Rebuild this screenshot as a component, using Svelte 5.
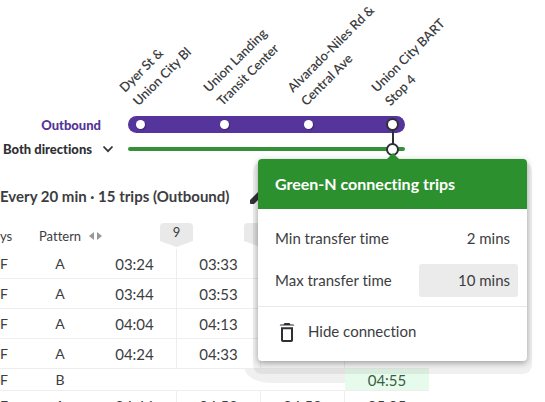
<script lang="ts">
	type Trip = { days: string; pattern: string; times: string[]; short?: boolean };

	const stops = [
		['Dyer St &', 'Union City Bl'],
		['Union Landing', 'Transit Center'],
		['Alvarado-Niles Rd &', 'Central Ave'],
		['Union City BART', 'Stop 4']
	];

	const trips: Trip[] = [
		{ days: 'F', pattern: 'A', times: ['03:24', '03:33', '', ''] },
		{ days: 'F', pattern: 'A', times: ['03:44', '03:53', '', ''] },
		{ days: 'F', pattern: 'A', times: ['04:04', '04:13', '', ''] },
		{ days: 'F', pattern: 'A', times: ['04:24', '04:33', '', ''] },
		{ days: 'F', pattern: 'B', times: ['', '', '', '04:55'], short: true },
		{ days: 'F', pattern: 'A', times: ['04:44', '04:53', '04:58', '05:05'] }
	];

	let minTransfer = $state('2 mins');
	let maxTransfer = $state('10 mins');
	let direction = $state('both');
</script>

<main>
	<section class="map">
		<ol class="labels">
			{#each stops as [first, second]}
				<li><span>{first}<br />{second}</span></li>
			{/each}
		</ol>

		<div class="direction outbound">Outbound</div>
		<div class="line purple">
			{#each stops as _, i}
				<span class="stop" class:linked={i === stops.length - 1}></span>
			{/each}
		</div>

		<div class="direction picker">
			<select bind:value={direction} aria-label="Direction">
				<option value="both">Both directions</option>
			</select>
			<svg width="12" height="8" viewBox="0 0 12 8" aria-hidden="true">
				<path d="M1.500 1.500 6 6.200l4.500-4.700" fill="none" stroke="#333438" stroke-width="1.800" />
			</svg>
		</div>
		<div class="line green">
			<div class="connection">
				<div class="popover">
					<h2>Green-N connecting trips</h2>
					<div class="fields">
						<div class="field">
							<label for="min">Min transfer time</label>
							<input id="min" type="text" bind:value={minTransfer} />
						</div>
						<div class="field">
							<label for="max">Max transfer time</label>
							<input id="max" class="active" type="text" bind:value={maxTransfer} />
						</div>
					</div>
					<button class="hide" type="button">
						<svg width="16" height="20" viewBox="0 0 16 20" aria-hidden="true">
							<path
								d="M3 6.200h10v12q0 .8-.8.8H3.800q-.8 0-.8-.8z"
								fill="none"
								stroke="#2f3034"
								stroke-width="2"
							/>
							<path
								d="M.8 3.400q0-.8.800-.8H4.500L5.500 1h5l1 1.600h2.900q.8 0 .8.800z"
								fill="#2f3034"
							/>
						</svg>
						Hide connection
					</button>
				</div>
			</div>
		</div>
	</section>

	<header class="summary">
		<h1>Every 20 min · 15 trips (Outbound)</h1>
		<button type="button" aria-label="Edit">
			<svg width="18" height="18" viewBox="0 0 18 18" aria-hidden="true">
				<path d="M1 13 11 3l4 4L5 17H2q-1 0-1-1zM12 2l1.500-1.500 4 4L16 6z" fill="#333438" />
			</svg>
		</button>
	</header>

	<table>
		<thead>
			<tr>
				<th class="days">ys</th>
				<th class="pattern">
					<span>
						Pattern
						<svg width="13" height="8" viewBox="0 0 13 8" aria-hidden="true">
							<path d="M5 0v8L0 4zM8 0v8l5-4z" fill="#97989b" />
						</svg>
					</span>
				</th>
				<th class="time"><span class="pin">9</span></th>
				<th class="time"><span class="pin"></span></th>
				<th class="time"></th>
				<th class="time"></th>
			</tr>
		</thead>
		<tbody>
			{#each trips as trip}
				<tr class:short={trip.short}>
					<td class="days">{trip.days}</td>
					<td class="pattern">{trip.pattern}</td>
					{#each trip.times as time}
						<td class="time" class:match={trip.short && time}>{time}</td>
					{/each}
				</tr>
			{/each}
		</tbody>
	</table>
</main>

<style>
	:global(body) {
		overflow: hidden;
		background: #fff;
	}

	main {
		height: 100vh;
		overflow: hidden;
		font-family: Lato, 'Liberation Sans', sans-serif;
		font-size: 15px;
		font-variant-ligatures: none;
		color: #3c3d41;
	}

	h1,
	h2,
	ol {
		margin: 0;
		padding: 0;
	}

	input,
	select,
	button {
		font: inherit;
		font-variant-ligatures: none;
		color: inherit;
		border: 0;
		background: none;
		padding: 0;
	}

	svg {
		flex: none;
	}

	.map {
		display: grid;
		grid-template-columns: 128px 277px;
		grid-template-rows: 116px 17px 32px;
		align-items: center;
	}

	.labels {
		grid-column: 2;
		align-self: end;
		display: grid;
		grid-template-columns: repeat(4, 84px);
		padding: 0 0 6px 14px;
		list-style: none;
		font-size: 13px;
		font-weight: 600;
		line-height: 19px;
		white-space: nowrap;
	}

	.labels span {
		display: inline-block;
		vertical-align: bottom;
		transform: rotate(-45deg);
		transform-origin: 0 100%;
	}

	.direction {
		display: flex;
		justify-content: flex-end;
		align-items: center;
		font-size: 13px;
		font-weight: 900;
		line-height: 16px;
	}

	.outbound {
		padding-right: 27px;
		color: #55349b;
	}

	.picker {
		gap: 9px;
		padding-right: 14px;
	}

	.picker select {
		appearance: none;
		color: #2f3034;
	}

	.line {
		display: flex;
		align-items: center;
		justify-content: space-between;
		box-sizing: border-box;
	}

	.purple {
		height: 17px;
		padding: 0 8px;
		border-radius: 9px;
		background: #55349b;
	}

	.stop {
		width: 9px;
		height: 9px;
		border-radius: 50%;
		background: #fff;
		box-shadow: 1px 1px 1px #3c2a70;
	}

	.stop.linked {
		box-shadow: 0 0 0 2px #2f3034;
	}

	.green {
		height: 4px;
		border-radius: 2px;
		background: #359038;
		justify-content: flex-end;
		padding-right: 6px;
	}

	.connection {
		position: relative;
		width: 9px;
		height: 9px;
		border: 2px solid #2f3034;
		border-radius: 50%;
		background: #fff;
	}

	/* joins the two circles */
	.connection::before {
		content: '';
		position: absolute;
		left: 4px;
		bottom: 9px;
		width: 2px;
		height: 14px;
		background: #2f3034;
	}

	.popover {
		position: absolute;
		top: 14px;
		left: -130px;
		z-index: 1;
		width: 269px;
		border-radius: 4px;
		background: #fff;
		box-shadow:
			0 2px 6px rgba(0, 0, 0, 0.35),
			0 8px 0 5px rgba(0, 0, 0, 0.06);
	}

	.popover::before {
		content: '';
		position: absolute;
		top: -6px;
		left: 128px;
		border: 7px solid transparent;
		border-top: 0;
		border-bottom-color: #2d902f;
	}

	.popover h2 {
		padding: 0 17px;
		border-radius: 4px 4px 0 0;
		background: #2d902f;
		color: #fff;
		font-size: 16px;
		font-weight: 700;
		line-height: 50px;
	}

	.fields {
		display: grid;
		gap: 9px;
		padding: 13px 9px 9px 17px;
		border-bottom: 1px solid #e9e9e9;
	}

	.field {
		display: flex;
		align-items: center;
		justify-content: space-between;
	}

	.field input {
		box-sizing: border-box;
		width: 99px;
		height: 33px;
		padding: 0 8px;
		border-radius: 3px;
		text-align: right;
	}

	.field input.active {
		background: #ebebeb;
	}

	.hide {
		display: flex;
		align-items: center;
		gap: 13px;
		width: 100%;
		padding: 15px 21px 19px;
		line-height: 19px;
	}

	.summary {
		display: flex;
		align-items: center;
		gap: 20px;
		height: 24px;
		margin-top: 19px;
	}

	h1 {
		font-size: 15px;
		font-weight: 700;
		line-height: 24px;
		white-space: nowrap;
	}

	.summary button {
		display: flex;
	}

	table {
		width: 429px;
		margin-top: 15px;
		border-collapse: separate;
		border-spacing: 0;
		table-layout: fixed;
	}

	th,
	td {
		padding: 0;
		font-weight: 400;
		text-align: center;
	}

	th {
		height: 26px;
		font-size: 13px;
	}

	td {
		box-sizing: border-box;
		height: 30px;
		border-bottom: 1px solid #eee;
	}

	.days {
		width: 27px;
		text-align: left;
	}

	.pattern {
		width: 66px;
	}

	td.days,
	td.pattern {
		font-size: 14px;
	}

	.pattern span {
		display: flex;
		align-items: center;
		gap: 8px;
		padding-left: 12px;
	}

	.time {
		position: relative;
	}

	td.time {
		border-right: 1px solid #eee;
	}

	td.time:last-child {
		border-right: 0;
	}

	.pin {
		position: absolute;
		top: 0;
		right: -16px;
		width: 33px;
		height: 24px;
		border-radius: 4px;
		background: #e9e9e9;
		clip-path: polygon(0 0, 100% 0, 100% 75%, 50% 100%, 0 75%);
		line-height: 19px;
	}

	.short td {
		height: 22px;
		border-right-color: transparent;
	}

	/* lower edge of the popover's halo, under the empty cells */
	.short .time:nth-child(5)::before {
		content: '';
		position: absolute;
		top: 0;
		left: -16px;
		right: -1px;
		height: 14px;
		border-bottom-left-radius: 28px 14px;
		background: #f0f0f0;
	}

	.short .match {
		background: #e6fbec;
		color: #3d5c46;
	}
</style>
